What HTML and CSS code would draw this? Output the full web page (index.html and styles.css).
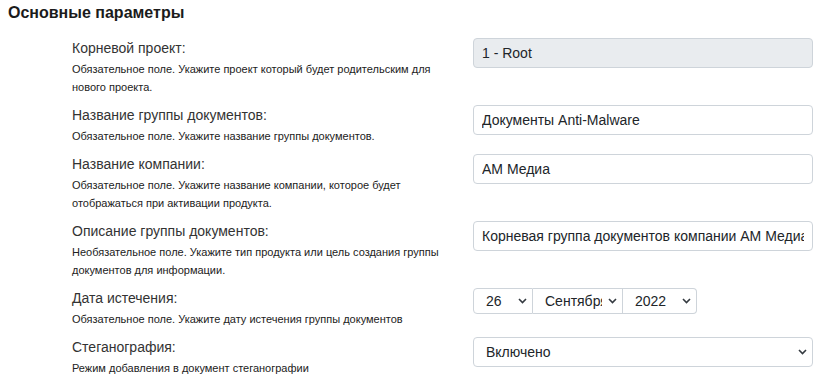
FILE: index.html
```html
<!DOCTYPE html>
<html lang="ru">
<head>
    <meta charset="UTF-8">
    <title>Основные параметры</title>
    <link rel="stylesheet" href="styles.css">
</head>
<body>
    <div class="page">
        <h2 class="section-title">Основные параметры</h2>

        <!-- Корневой проект -->
        <div class="form-row">
            <div class="label-col">
                <div class="field-label">Корневой проект:</div>
                <div class="field-help">Обязательное поле. Укажите проект который будет родительским для нового проекта.</div>
            </div>
            <div class="field-col">
                <input class="form-input" type="text" value="1 - Root" disabled>
            </div>
        </div>

        <!-- Название группы -->
        <div class="form-row">
            <div class="label-col">
                <div class="field-label">Название группы документов:</div>
                <div class="field-help">Обязательное поле. Укажите название группы документов.</div>
            </div>
            <div class="field-col">
                <input class="form-input" type="text" value="Документы Anti-Malware">
            </div>
        </div>

        <!-- Компания -->
        <div class="form-row">
            <div class="label-col">
                <div class="field-label">Название компании:</div>
                <div class="field-help">Обязательное поле. Укажите название компании, которое будет отображаться при активации продукта.</div>
            </div>
            <div class="field-col">
                <input class="form-input" type="text" value="АМ Медиа">
            </div>
        </div>

        <!-- Описание -->
        <div class="form-row">
            <div class="label-col">
                <div class="field-label">Описание группы документов:</div>
                <div class="field-help">Необязательное поле. Укажите тип продукта или цель создания группы документов для информации.</div>
            </div>
            <div class="field-col">
                <input class="form-input" type="text" value="Корневая группа документов компании АМ Медиа">
            </div>
        </div>

        <!-- Дата истечения -->
        <div class="form-row">
            <div class="label-col">
                <div class="field-label">Дата истечения:</div>
                <div class="field-help">Обязательное поле. Укажите дату истечения группы документов</div>
            </div>
            <div class="field-col">
                <div class="date-group">
                    <div class="select-wrap day">
                        <select class="form-select small">
                            <option>26</option>
                        </select>
                        <svg class="chevron" width="9" height="6" viewBox="0 0 9 6"><path d="M1 1l3.5 3.5L8 1" fill="none" stroke="#343a40" stroke-width="1.6"/></svg>
                    </div>
                    <div class="select-wrap month">
                        <select class="form-select small">
                            <option>Сентября</option>
                        </select>
                        <svg class="chevron" width="9" height="6" viewBox="0 0 9 6"><path d="M1 1l3.5 3.5L8 1" fill="none" stroke="#343a40" stroke-width="1.6"/></svg>
                    </div>
                    <div class="select-wrap year">
                        <select class="form-select small">
                            <option>2022</option>
                        </select>
                        <svg class="chevron" width="9" height="6" viewBox="0 0 9 6"><path d="M1 1l3.5 3.5L8 1" fill="none" stroke="#343a40" stroke-width="1.6"/></svg>
                    </div>
                </div>
            </div>
        </div>

        <!-- Стеганография -->
        <div class="form-row">
            <div class="label-col">
                <div class="field-label">Стеганография:</div>
                <div class="field-help">Режим добавления в документ стеганографии</div>
            </div>
            <div class="field-col">
                <div class="select-wrap full">
                    <select class="form-select">
                        <option>Включено</option>
                        <option>Выключено</option>
                    </select>
                    <svg class="chevron" width="9" height="6" viewBox="0 0 9 6"><path d="M1 1l3.5 3.5L8 1" fill="none" stroke="#343a40" stroke-width="1.6"/></svg>
                </div>
            </div>
        </div>
    </div>
</body>
</html>
```

FILE: styles.css
```css
/* Основные стили */
body {
    margin: 0;
    font-family: "Liberation Sans", Arial, sans-serif;
    color: #212529;
    background-color: #fff;
}

.page {
    padding: 3px 8px;
}

.section-title {
    font-size: 16px;
    font-weight: bold;
    line-height: 20px;
    margin: 0 0 15px 0;
    color: #1b1b1b;
}

/* Строки формы */
.form-row {
    display: flex;
    margin-bottom: 9px;
}

.label-col {
    width: 385px;
    margin-left: 64px;
}

.field-label {
    font-size: 14px;
    line-height: 20px;
    color: #333;
}

.field-help {
    font-size: 11px;
    line-height: 18px;
    margin-top: 2px;
    color: #222;
}

.field-col {
    width: 340px;
    margin-left: 16px;
}

/* Поля ввода */
.form-input {
    box-sizing: border-box;
    width: 100%;
    height: 30px;
    padding: 0 8px;
    font-family: "Liberation Sans", Arial, sans-serif;
    font-size: 14px;
    color: #212529;
    background-color: #fff;
    border: 1px solid #ced4da;
    border-radius: 4px;
}

.form-input:disabled {
    background-color: #e9ecef;
}

/* Выпадающие списки */
.select-wrap {
    position: relative;
}

.form-select {
    box-sizing: border-box;
    width: 100%;
    height: 30px;
    padding: 0 20px 0 12px;
    font-family: "Liberation Sans", Arial, sans-serif;
    font-size: 14px;
    color: #212529;
    background-color: #fff;
    border: 1px solid #ced4da;
    border-radius: 4px;
    appearance: none;
    -webkit-appearance: none;
}

.form-select.small {
    height: 26px;
}

.chevron {
    position: absolute;
    right: 6px;
    top: 50%;
    margin-top: -3px;
    pointer-events: none;
}

/* Группа даты */
.date-group {
    display: flex;
    width: 224px;
}

.date-group .day {
    width: 60px;
}

.date-group .month {
    width: 90px;
}

.date-group .year {
    width: 74px;
}

.date-group .day .form-select {
    border-radius: 4px 0 0 4px;
}

.date-group .month .form-select {
    border-radius: 0;
    border-left: none;
}

.date-group .year .form-select {
    border-radius: 0 4px 4px 0;
    border-left: none;
}
```
